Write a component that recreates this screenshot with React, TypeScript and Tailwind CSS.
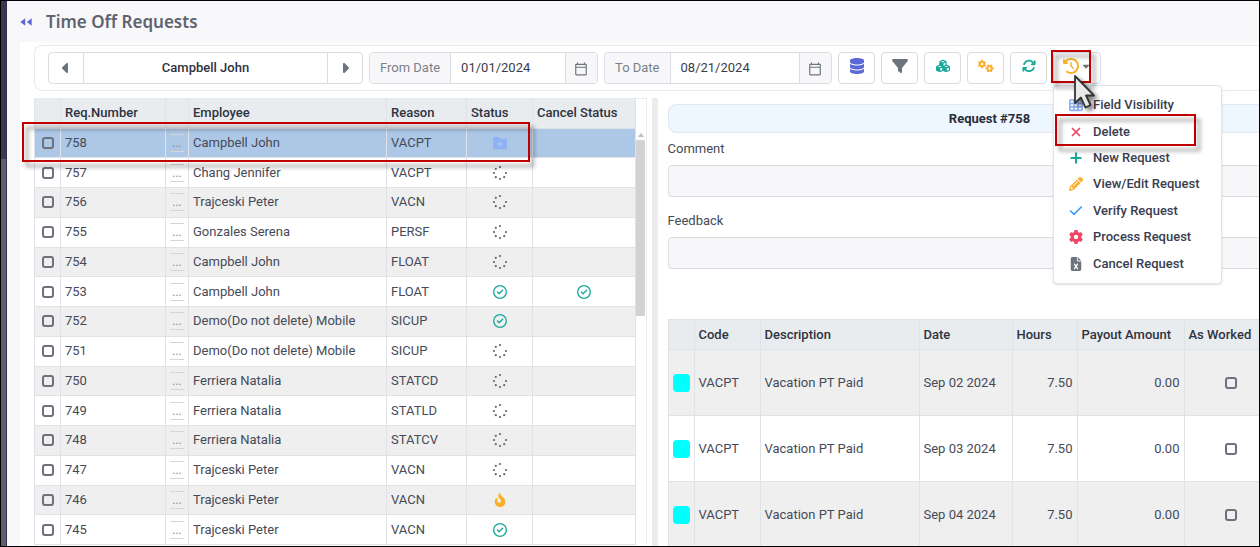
import { useState } from "react";
import type { ReactNode } from "react";
import { Check, Plus, X } from "lucide-react";
import { MdOutlineCalendarToday } from "react-icons/md";
import {
  FaArrowsRotate,
  FaCaretDown,
  FaCaretLeft,
  FaCaretRight,
  FaClockRotateLeft,
  FaCubes,
  FaDatabase,
  FaFileExcel,
  FaFilter,
  FaFireFlameCurved,
  FaFolderPlus,
  FaGear,
  FaGears,
  FaPencil,
  FaRegCircleCheck,
  FaTableCells,
} from "react-icons/fa6";

type Status = "new" | "pending" | "approved" | "hot";

interface TimeOffRequest {
  id: number;
  employee: string;
  reason: string;
  status: Status;
  cancelStatus?: Status;
}

const REQUESTS: TimeOffRequest[] = [
  { id: 758, employee: "Campbell John", reason: "VACPT", status: "new" },
  { id: 757, employee: "Chang Jennifer", reason: "VACPT", status: "pending" },
  { id: 756, employee: "Trajceski Peter", reason: "VACN", status: "pending" },
  { id: 755, employee: "Gonzales Serena", reason: "PERSF", status: "pending" },
  { id: 754, employee: "Campbell John", reason: "FLOAT", status: "pending" },
  { id: 753, employee: "Campbell John", reason: "FLOAT", status: "approved", cancelStatus: "approved" },
  { id: 752, employee: "Demo(Do not delete) Mobile", reason: "SICUP", status: "approved" },
  { id: 751, employee: "Demo(Do not delete) Mobile", reason: "SICUP", status: "pending" },
  { id: 750, employee: "Ferriera Natalia", reason: "STATCD", status: "pending" },
  { id: 749, employee: "Ferriera Natalia", reason: "STATLD", status: "pending" },
  { id: 748, employee: "Ferriera Natalia", reason: "STATCV", status: "pending" },
  { id: 747, employee: "Trajceski Peter", reason: "VACN", status: "pending" },
  { id: 746, employee: "Trajceski Peter", reason: "VACN", status: "hot" },
  { id: 745, employee: "Trajceski Peter", reason: "VACN", status: "approved" },
];

const DETAILS = [
  { code: "VACPT", description: "Vacation PT Paid", date: "Sep 02 2024", hours: "7.50", payout: "0.00" },
  { code: "VACPT", description: "Vacation PT Paid", date: "Sep 03 2024", hours: "7.50", payout: "0.00" },
  { code: "VACPT", description: "Vacation PT Paid", date: "Sep 04 2024", hours: "7.50", payout: "0.00" },
];

const TOOLS = [
  { label: "Data", icon: <FaDatabase className="size-4 text-[#5b69d6]" /> },
  { label: "Filter", icon: <FaFilter className="size-4 text-[#6c757d]" /> },
  { label: "Groups", icon: <FaCubes className="size-3.5 text-[#16a89a]" /> },
  { label: "Settings", icon: <FaGears className="size-4 text-[#fbb02d]" /> },
  { label: "Refresh", icon: <FaArrowsRotate className="size-3.5 text-[#16a89a]" /> },
];

const MENU = [
  { label: "Field Visibility", icon: <FaTableCells className="size-3.5 text-[#8fb1f6]" /> },
  { label: "Delete", icon: <X className="size-3.5 text-[#ef4565]" strokeWidth={3} /> },
  { label: "New Request", icon: <Plus className="size-4 text-[#16a89a]" strokeWidth={3} /> },
  { label: "View/Edit Request", icon: <FaPencil className="size-3.5 text-[#fbb02d]" /> },
  { label: "Verify Request", icon: <Check className="size-4 text-[#3d9df6]" strokeWidth={2.5} /> },
  { label: "Process Request", icon: <FaGear className="size-3.5 text-[#ef4565]" /> },
  { label: "Cancel Request", icon: <FaFileExcel className="size-3.5 text-[#6c757d]" /> },
];

const SPINNER_DOTS = [
  [8, 2],
  [3.8, 3.8],
  [2, 8],
  [3.8, 12.2],
  [8, 14],
  [12.2, 12.2],
  [14, 8],
];

function StatusIcon({ status }: { status: Status }) {
  if (status === "new") return <FaFolderPlus className="mx-auto size-3.5 text-[#8fb1f6]" />;
  if (status === "approved") return <FaRegCircleCheck className="mx-auto size-3.5 text-[#16a89a]" />;
  if (status === "hot") return <FaFireFlameCurved className="mx-auto size-3.5 text-[#fbb02d]" />;
  return (
    <svg viewBox="0 0 16 16" className="mx-auto size-4" fill="#5f6773">
      {SPINNER_DOTS.map(([x, y]) => (
        <circle key={`${x}-${y}`} cx={x} cy={y} r="1.1" />
      ))}
    </svg>
  );
}

function Highlight({ className }: { className: string }) {
  return (
    <span
      className={`pointer-events-none absolute z-30 border-2 border-[#c00000] drop-shadow-[4px_5px_2px_rgba(0,0,0,0.45)] ${className}`}
    />
  );
}

function Checkbox({ label, checked, onChange }: { label: string; checked?: boolean; onChange?: () => void }) {
  return (
    <input
      type="checkbox"
      aria-label={label}
      checked={checked}
      onChange={onChange}
      className="mx-auto block size-3 appearance-none rounded-[3px] border-2 border-[#6d707d] checked:bg-[#6d707d]"
    />
  );
}

function DateField({ id, label, value, className }: { id: string; label: string; value: string; className: string }) {
  return (
    <div className={`flex h-8 shrink-0 overflow-hidden rounded-sm border border-[#d9dce3] ${className}`}>
      <label htmlFor={id} className="flex shrink-0 items-center border-r border-[#d9dce3] bg-[#f7f7fa] px-2.5 text-[#7b818b]">
        {label}
      </label>
      <input id={id} defaultValue={value} className="min-w-0 flex-1 px-2.5 text-[#3a3d4a] outline-none" />
      <button
        aria-label={`Pick ${label}`}
        className="flex w-8 items-center justify-center border-l border-[#d9dce3] bg-[#f7f7fa] pt-px pr-0.5"
      >
        <MdOutlineCalendarToday className="size-3.5 text-[#6c757d]" />
      </button>
    </div>
  );
}

function Toolbar() {
  return (
    <div className="flex h-[46px] shrink-0 items-center gap-1.5 rounded-l-lg border-y border-l border-[#e9e9ee] pl-[13px]">
      <div className="flex h-8 w-[315px] shrink-0 rounded-sm border border-[#d9dce3]">
        <button aria-label="Previous employee" className="flex w-[35px] items-center justify-center border-r border-[#d9dce3]">
          <FaCaretLeft className="size-4 text-[#6c757d]" />
        </button>
        <div className="flex flex-1 items-center justify-center font-medium text-[#2f3240]">Campbell John</div>
        <button aria-label="Next employee" className="flex w-[35px] items-center justify-center border-l border-[#d9dce3]">
          <FaCaretRight className="size-4 text-[#6c757d]" />
        </button>
      </div>
      <DateField id="from-date" label="From Date" value="01/01/2024" className="w-[229px]" />
      <DateField id="to-date" label="To Date" value="08/21/2024" className="w-[228px]" />
      {TOOLS.map((tool) => (
        <ToolButton key={tool.label} label={tool.label}>
          {tool.icon}
        </ToolButton>
      ))}
      <ActionsMenu />
    </div>
  );
}

function ToolButton({ label, children }: { label: string; children: ReactNode }) {
  return (
    <button
      aria-label={label}
      className="flex h-8 w-[37px] shrink-0 items-center justify-center rounded-sm border border-[#d9dce3] pb-1"
    >
      {children}
    </button>
  );
}

function ActionsMenu() {
  const [open, setOpen] = useState(true);

  return (
    <div className="relative shrink-0">
      <button
        aria-label="Actions"
        aria-expanded={open}
        onClick={() => setOpen((o) => !o)}
        className="flex h-8 w-12 items-center justify-center gap-0.5 rounded-sm border border-[#d9dce3] pb-1"
      >
        <FaClockRotateLeft className="size-4 text-[#fbb02d]" />
        <FaCaretDown className="size-2.5 text-[#6c757d]" />
      </button>
      <Highlight className="-top-0.5 -left-0.5 h-[33px] w-10" />
      {open && (
        <ul className="absolute top-full left-0 z-20 mt-px flex h-[199px] w-[169px] flex-col rounded-sm border border-[#e2e4ea] bg-white py-1.5 shadow-sm">
          {MENU.map((item) => (
            <li key={item.label} className="relative flex flex-1">
              <button className="flex flex-1 items-center pl-3.5 font-medium whitespace-nowrap text-[#3a3d4f]">
                <span className="flex w-4 justify-center">{item.icon}</span>
                <span className="pl-[9px]">{item.label}</span>
              </button>
              {item.label === "Delete" && <Highlight className="-top-1 left-px h-8 w-[141px]" />}
            </li>
          ))}
        </ul>
      )}
      <svg viewBox="0 0 24 36" className="absolute top-[22px] left-5 z-40 h-9 w-6 drop-shadow-[3px_3px_2px_rgba(0,0,0,0.5)]">
        <path
          d="M2 2 V29 L8 23.5 L12.5 33.5 L17.5 31 L13 21.5 H21 Z"
          fill="#e9e9e9"
          stroke="#333"
          strokeWidth="1.8"
          strokeLinejoin="round"
        />
      </svg>
    </div>
  );
}

function RequestTable() {
  const [selected, setSelected] = useState(758);
  const [checked, setChecked] = useState<number[]>([]);

  const toggle = (id: number) => {
    setChecked((list) => (list.includes(id) ? list.filter((x) => x !== id) : [...list, id]));
  };

  return (
    <div className="relative flex w-1/2 shrink-0 pb-px">
      <table className="h-full flex-1 table-fixed border-collapse text-left text-[#464a58]">
        <colgroup>
          <col className="w-[26px]" />
          <col className="w-[105px]" />
          <col className="w-[21px]" />
          <col className="w-[198px]" />
          <col className="w-20" />
          <col className="w-[66px]" />
          <col />
        </colgroup>
        <thead className="bg-[#e8ecef] text-[#2f3240]">
          <tr className="h-[30px] *:border-x *:border-[#dfe3e8] *:px-1 *:font-medium">
            <th />
            <th>Req.Number</th>
            <th />
            <th>Employee</th>
            <th>Reason</th>
            <th>Status</th>
            <th className="whitespace-nowrap">Cancel Status</th>
          </tr>
        </thead>
        <tbody>
          {REQUESTS.map((r) => (
            <tr
              key={r.id}
              onClick={() => setSelected(r.id)}
              className={`*:border *:border-[#dfe3e8] *:px-1 *:py-0 ${
                r.id === selected ? "bg-[#adc7e6]" : "bg-white odd:bg-[#efefef]"
              }`}
            >
              <td>
                <Checkbox label={`Select ${r.id}`} checked={checked.includes(r.id)} onChange={() => toggle(r.id)} />
              </td>
              <td>{r.id}</td>
              <td>
                <button
                  aria-label={`Open ${r.id}`}
                  className="mx-auto block h-[18px] w-3.5 border-y border-[#d5d5d5] text-xs leading-4 text-[#8a8a8a]"
                >
                  ...
                </button>
              </td>
              <td className="whitespace-nowrap">{r.employee}</td>
              <td>{r.reason}</td>
              <td>
                <StatusIcon status={r.status} />
              </td>
              <td>{r.cancelStatus && <StatusIcon status={r.cancelStatus} />}</td>
            </tr>
          ))}
        </tbody>
      </table>
      <div className="flex w-[11px] flex-col items-center border-t border-r border-[#ececec] pt-[34px]">
        <svg viewBox="0 0 6 4" className="h-1 w-1.5 shrink-0" fill="#bdbdbd">
          <path d="M3 0 L6 4 H0 Z" />
        </svg>
        <div className="mt-[3px] h-44 w-[9px] bg-[#d3d1d1]" />
      </div>
      <Highlight className="top-6 -left-3 h-10 w-[508px]" />
    </div>
  );
}

function DetailTable() {
  return (
    <table className="mt-[50px] w-[610px] table-fixed border-collapse text-left text-[#464a58]">
      <colgroup>
        <col className="w-[26px]" />
        <col className="w-[66px]" />
        <col className="w-[159px]" />
        <col className="w-[93px]" />
        <col className="w-[65px]" />
        <col className="w-[107px]" />
        <col />
      </colgroup>
      <thead className="bg-[#e8ecef] text-[#2f3240]">
        <tr className="h-[30px] *:border *:border-[#dfe3e8] *:px-1 *:font-medium *:whitespace-nowrap">
          <th />
          <th>Code</th>
          <th>Description</th>
          <th>Date</th>
          <th>Hours</th>
          <th>Payout Amount</th>
          <th>As Worked</th>
        </tr>
      </thead>
      <tbody>
        {DETAILS.map((d) => (
          <tr key={d.date} className="h-[66px] odd:bg-[#efefef] *:border *:border-[#dfe3e8] *:px-1">
            <td>
              <span className="block h-[18px] w-[17px] rounded-sm bg-[#00ffff]" />
            </td>
            <td>{d.code}</td>
            <td>{d.description}</td>
            <td className="whitespace-nowrap">{d.date}</td>
            <td className="text-right">{d.hours}</td>
            <td className="text-right">{d.payout}</td>
            <td>
              <Checkbox label={`As worked ${d.date}`} />
            </td>
          </tr>
        ))}
      </tbody>
    </table>
  );
}

function RequestDetails() {
  return (
    <div className="min-w-0 flex-1 overflow-hidden pl-2.5">
      <div className="w-[644px]">
        <h2 className="mt-1.5 flex h-[29px] items-center justify-center rounded-lg border border-[#e3e9f0] bg-[#eef6ff] font-bold text-[#2a2d3a]">
          Request #758
        </h2>
        <label htmlFor="comment" className="mt-1.5 block leading-5 text-[#464a58]">
          Comment
        </label>
        <input
          id="comment"
          className="mt-1.5 block h-8 w-full rounded-sm border border-[#d9dce3] bg-[#f7f7fa] px-2.5 outline-none"
        />
        <label htmlFor="feedback" className="mt-3.5 block leading-5 text-[#464a58]">
          Feedback
        </label>
        <input
          id="feedback"
          className="mt-1.5 block h-8 w-full rounded-sm border border-[#d9dce3] bg-[#f7f7fa] px-2.5 outline-none"
        />
        <DetailTable />
      </div>
    </div>
  );
}

export default function App() {
  return (
    <div className="flex h-screen overflow-hidden border border-black bg-[#f8f8fb] font-['Roboto',sans-serif] text-[13px] leading-5">
      <div className="flex w-1.5 shrink-0 flex-col border-r border-[#34324a] bg-[#5d606c]">
        <div className="h-[158px] bg-[#3a3850]" />
      </div>
      <div className="flex min-w-0 flex-1 flex-col pl-[13px]">
        <header className="flex h-[41px] shrink-0 items-center gap-3.5">
          <button aria-label="Collapse menu">
            <svg viewBox="0 0 12 8" className="h-2 w-3" fill="#5b69d6">
              <path d="M5.2 0.3 V7.7 L0.3 4 Z M11.7 0.3 V7.7 L6.8 4 Z" />
            </svg>
          </button>
          <h1 className="font-['Noto_Sans',sans-serif] text-[17px] font-semibold text-[#5f636e]">Time Off Requests</h1>
        </header>
        <main className="flex min-h-0 flex-1 flex-col bg-white pt-[3px] pl-3.5">
          <Toolbar />
          <div className="mt-[7px] flex min-h-0 flex-1">
            <RequestTable />
            <div className="ml-[5px] w-1.5 shrink-0 bg-[#ececec]" />
            <RequestDetails />
          </div>
        </main>
      </div>
    </div>
  );
}
